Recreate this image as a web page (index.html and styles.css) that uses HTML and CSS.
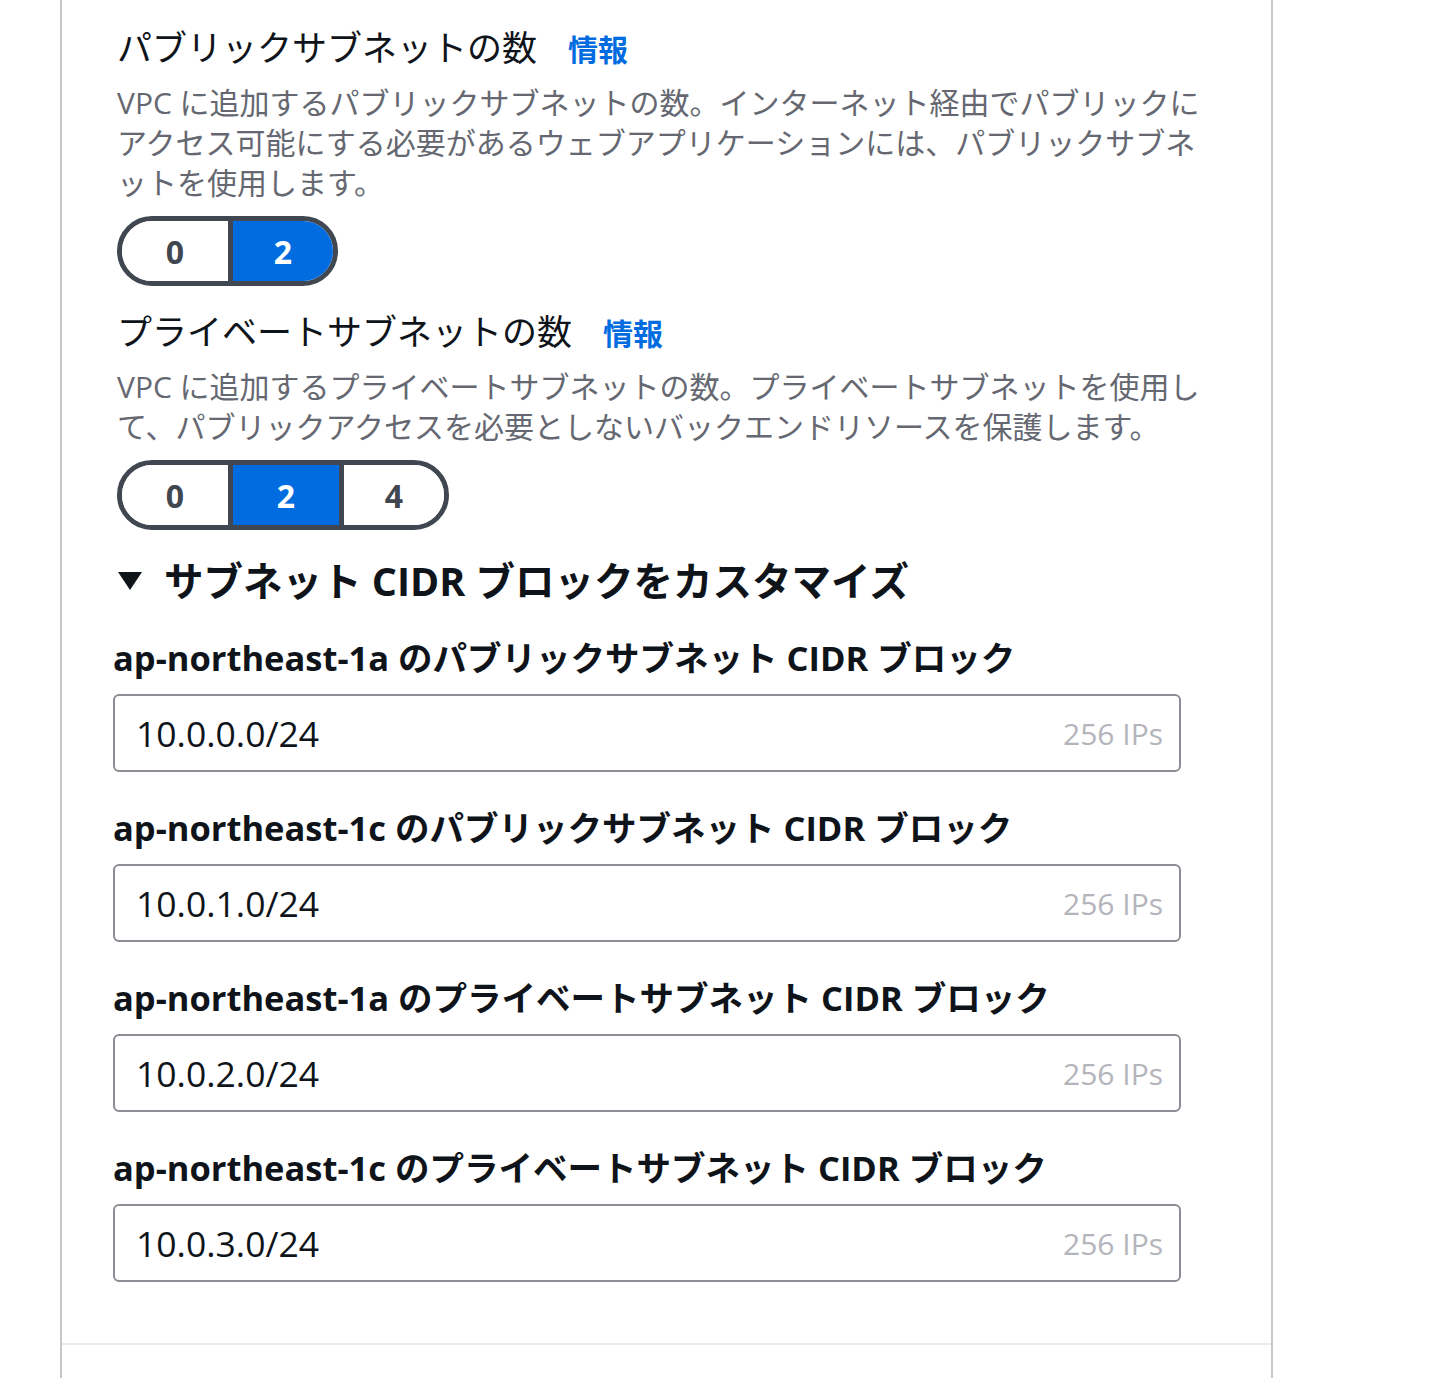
FILE: index.html
```html
<!DOCTYPE html>
<html lang="ja">
<head>
<meta charset="utf-8">
<link rel="stylesheet" href="styles.css">
<title>VPC</title>
</head>
<body>
<div class="panel">
  <div class="content">
    <div class="field">
      <div class="title">パブリックサブネットの数<a class="info">情報</a></div>
      <div class="desc">VPC に追加するパブリックサブネットの数。インターネット経由でパブリックにアクセス可能にする必要があるウェブアプリケーションには、パブリックサブネットを使用します。</div>
      <div class="seg">
        <span class="opt">0</span><span class="opt on">2</span>
      </div>
    </div>
    <div class="field">
      <div class="title">プライベートサブネットの数<a class="info">情報</a></div>
      <div class="desc">VPC に追加するプライベートサブネットの数。プライベートサブネットを使用して、パブリックアクセスを必要としないバックエンドリソースを保護します。</div>
      <div class="seg">
        <span class="opt">0</span><span class="opt on">2</span><span class="opt">4</span>
      </div>
    </div>
    <div class="expander">
      <svg class="caret" width="24" height="18" viewBox="0 0 24 18"><polygon points="0,0 24,0 12,18" fill="#0f141a"/></svg>
      <span>サブネット CIDR ブロックをカスタマイズ</span>
    </div>
    <div class="cidr">
      <div class="label">ap-northeast-1a のパブリックサブネット CIDR ブロック</div>
      <div class="input"><span class="val">10.0.0.0/24</span><span class="hint">256 IPs</span></div>
    </div>
    <div class="cidr">
      <div class="label">ap-northeast-1c のパブリックサブネット CIDR ブロック</div>
      <div class="input"><span class="val">10.0.1.0/24</span><span class="hint">256 IPs</span></div>
    </div>
    <div class="cidr">
      <div class="label">ap-northeast-1a のプライベートサブネット CIDR ブロック</div>
      <div class="input"><span class="val">10.0.2.0/24</span><span class="hint">256 IPs</span></div>
    </div>
    <div class="cidr">
      <div class="label">ap-northeast-1c のプライベートサブネット CIDR ブロック</div>
      <div class="input"><span class="val">10.0.3.0/24</span><span class="hint">256 IPs</span></div>
    </div>
  </div>
  <div class="footer"></div>
</div>
</body>
</html>
```
FILE: styles.css
```css
html, body {
  margin: 0;
  padding: 0;
  background: #ffffff;
}
body {
  font-family: "Open Sans", "Noto Sans CJK JP", sans-serif;
  color: #0f141a;
}
.panel {
  margin-left: 60px;
  width: 1209px;
  min-height: 1378px;
  border-left: 2px solid #c6c6cd;
  border-right: 2px solid #c6c6cd;
  display: flex;
  flex-direction: column;
}
.content {
  padding: 23px 0 61px 51px;
  display: flex;
  flex-direction: column;
}
.field {
  padding-left: 4px;
  width: 1100px;
  display: flex;
  flex-direction: column;
  margin-bottom: 21px;
}
.title {
  font-size: 35px;
  line-height: 50px;
  margin-bottom: 8px;
  display: flex;
  align-items: baseline;
}
.info {
  color: #006ce0;
  font-weight: 700;
  font-size: 30px;
  margin-left: 31px;
}
.desc {
  font-size: 30px;
  line-height: 40px;
  color: #656871;
  margin-bottom: 13px;
}
.seg {
  display: flex;
  align-self: flex-start;
  border: 5px solid #414750;
  border-radius: 36px;
  overflow: hidden;
  height: 60px;
}
.opt {
  width: 106px;
  display: flex;
  align-items: center;
  justify-content: center;
  font-weight: 700;
  font-size: 32px;
  color: #414750;
  background: #fff;
}
.opt:last-child {
  width: 100px;
}
.opt + .opt {
  border-left: 5px solid #414750;
}
.opt.on {
  background: #006ce0;
  color: #ffffff;
}
.expander {
  display: flex;
  align-items: center;
  gap: 22px;
  padding-left: 5px;
  font-size: 39.5px;
  font-weight: 700;
  line-height: 50px;
  margin-top: 5px;
  margin-bottom: 28px;
}
.caret {
  display: block;
}
.cidr {
  display: flex;
  flex-direction: column;
  margin-bottom: 32px;
}
.cidr:last-child {
  margin-bottom: 0;
}
.label {
  font-size: 34.5px;
  font-weight: 700;
  line-height: 48px;
  margin-bottom: 12px;
}
.input {
  box-sizing: border-box;
  width: 1068px;
  height: 78px;
  border: 2px solid #8c8c94;
  border-radius: 6px;
  display: flex;
  align-items: center;
  justify-content: space-between;
  padding: 0 16px 0 21px;
}
.val {
  font-size: 35.5px;
  color: #0f141a;
}
.hint {
  font-size: 30px;
  color: #b4b4bb;
}
.footer {
  border-top: 2px solid #e9ebed;
  height: 40px;
}
```
